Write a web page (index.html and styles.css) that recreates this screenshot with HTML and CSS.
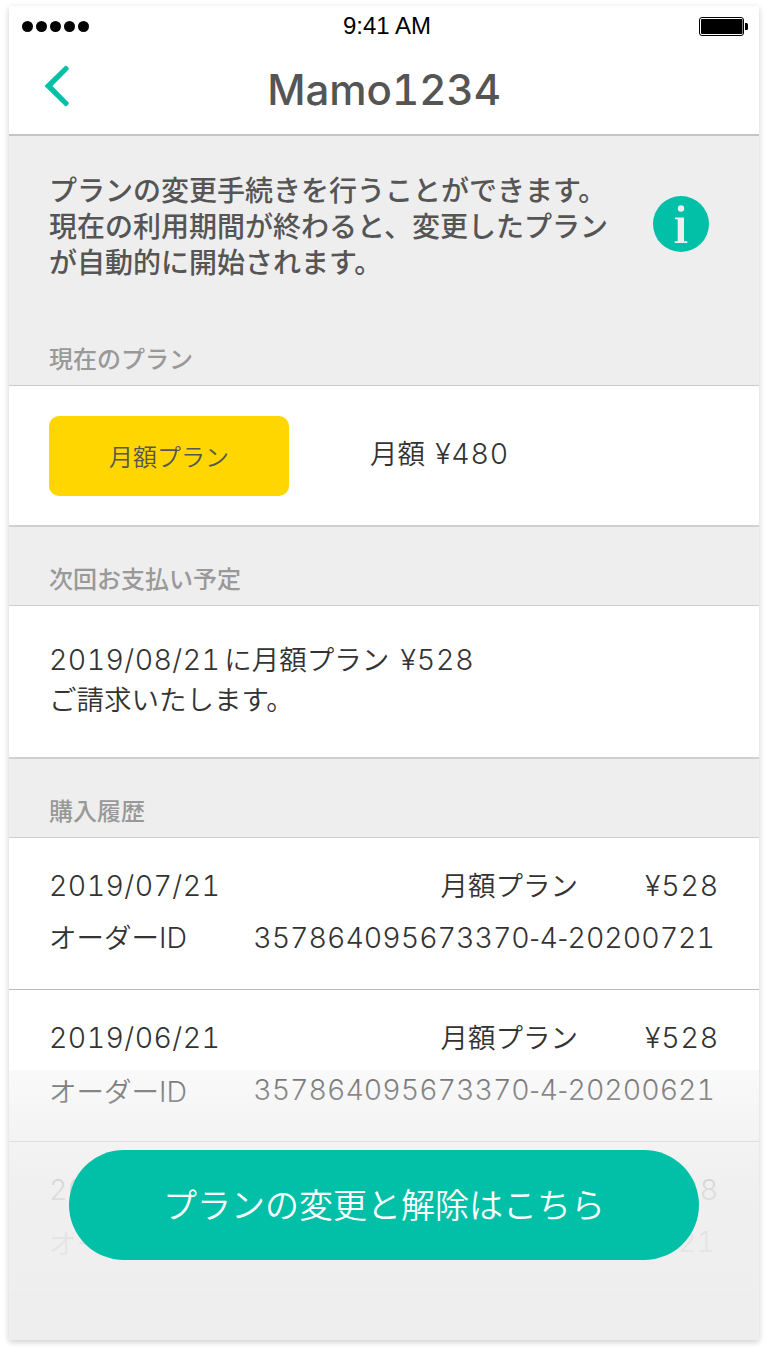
FILE: index.html
```html
<!DOCTYPE html>
<html lang="ja">
<head>
<meta charset="UTF-8" />
<meta name="viewport" content="width=device-width, initial-scale=1" />
<title>Mamo1234</title>
<link rel="stylesheet" href="styles.css">
</head>
<body>
  <div class="phone">
    <header class="header">
      <div class="status-bar">
        <div class="signal"><i></i><i></i><i></i><i></i><i></i></div>
        <div class="time">9:41 AM</div>
        <svg class="battery" width="49" height="20" viewBox="0 0 49 20" aria-hidden="true">
          <rect x="0.5" y="0.5" width="44" height="18" rx="2.5" fill="none" stroke="#000"/>
          <rect x="2" y="2" width="41.5" height="15" rx="1" fill="#000"/>
          <path d="M46 6h1.5a1.5 1.5 0 0 1 1.5 1.5v4a1.5 1.5 0 0 1-1.5 1.5H46z" fill="#000"/>
        </svg>
      </div>
      <div class="nav">
        <svg class="back" width="26" height="42" viewBox="0 0 26 42" aria-label="戻る">
          <path d="M0.5 21L21 0.9Q22 0.4 23 1.3L24.6 2.9Q25.2 3.8 24.6 4.6L8.4 21L24.6 37.4Q25.2 38.2 24.6 39.1L23 40.7Q22 41.6 21 41.1Z" fill="#02c0a7"/>
        </svg>
        <h1>Mamo1234</h1>
      </div>
    </header>

    <section class="intro">
      <p>プランの変更手続きを行うことができます。<br>現在の利用期間が終わると、変更したプラン<br>が自動的に開始されます。</p>
      <svg class="info" width="56" height="56" viewBox="0 0 56 56" aria-hidden="true">
        <circle cx="28" cy="28" r="28" fill="#02c0a7"/>
        <circle cx="28" cy="12.5" r="3.2" fill="#eee"/>
        <path d="M22 21.5H31V45.2H34.3V47H21.7V45.2H24.7V23.2H22Z" fill="#eee"/>
      </svg>
    </section>

    <h2 class="section-title first">現在のプラン</h2>
    <section class="panel plan">
      <div class="plan-badge">月額プラン</div>
      <div class="plan-price">月額 <span class="num yen">¥480</span></div>
    </section>

    <h2 class="section-title">次回お支払い予定</h2>
    <section class="panel payment">
      <p><span class="num date">2019/08/21</span>に月額プラン <span class="num yen">¥528</span><br>ご請求いたします。</p>
    </section>

    <h2 class="section-title">購入履歴</h2>
    <section class="history">
      <div class="order">
        <div class="order-row">
          <span class="num date">2019/07/21</span>
          <span class="plan-name">月額プラン</span>
          <span class="num yen price">¥528</span>
        </div>
        <div class="order-row">
          <span class="label">オーダー<span class="latin">ID</span></span>
          <span class="num order-id">357864095673370<span class="dash">-</span>4<span class="dash">-</span>20200721</span>
        </div>
      </div>
      <div class="order">
        <div class="order-row">
          <span class="num date">2019/06/21</span>
          <span class="plan-name">月額プラン</span>
          <span class="num yen price">¥528</span>
        </div>
        <div class="order-row">
          <span class="label low">オーダー<span class="latin">ID</span></span>
          <span class="num order-id">357864095673370<span class="dash">-</span>4<span class="dash">-</span>20200621</span>
        </div>
      </div>
      <div class="order">
        <div class="order-row">
          <span class="num date">2019/05/21</span>
          <span class="plan-name">月額プラン</span>
          <span class="num yen price">¥528</span>
        </div>
        <div class="order-row">
          <span class="label low">オーダー<span class="latin">ID</span></span>
          <span class="num order-id">357864095673370<span class="dash">-</span>4<span class="dash">-</span>20200521</span>
        </div>
      </div>
    </section>

    <div class="footer">
      <button class="change-btn">プランの変更と解除はこちら</button>
    </div>
  </div>
</body>
</html>
```
FILE: styles.css
```css
* {
  box-sizing: border-box;
}

body {
  margin: 0;
  padding: 6px 9px 12px;
  background: #fff;
  color: #333;
  font-family: "Noto Sans CJK JP", sans-serif;
  font-size: 27.5px;
  font-weight: 350;
}

h1, h2, p {
  margin: 0;
}

.phone {
  position: relative;
  width: 750px;
  height: 1334px;
  overflow: hidden;
  background: #eee;
  box-shadow: 0 2px 6px rgba(0,0,0,0.2);
}

.num,
.latin {
  font-family: Inter, sans-serif;
  font-size: 28.5px;
  font-weight: 300;
  line-height: 1;
  white-space: nowrap;
}

.num {
  font-variant-numeric: tabular-nums;
}

.date {
  letter-spacing: 0.4px;
}

.yen {
  letter-spacing: 0.8px;
}

.dash {
  font-family: "Noto Sans CJK JP", sans-serif;
  font-weight: 350;
  font-size: 28px;
  line-height: 0;
}

/* Header */
.header {
  height: 130px;
  background: #fff;
  border-bottom: 2px solid #c4c4c9;
}

.status-bar {
  display: grid;
  grid-template-columns: 1fr auto 1fr;
  align-items: center;
  height: 40px;
  padding: 0 11px 0 13px;
}

.signal {
  display: flex;
  gap: 3px;
}

.signal i {
  width: 11px;
  height: 11px;
  border-radius: 50%;
  background: #000;
}

.time {
  padding-left: 4px;
  color: #000;
  font-family: "Liberation Sans", sans-serif;
  font-size: 24px;
  font-weight: 400;
  line-height: 40px;
}

.battery {
  justify-self: end;
  margin-top: 2px;
}

.nav {
  display: grid;
  grid-template-columns: 80px 1fr 80px;
  align-items: center;
  height: 80px;
}

.back {
  justify-self: end;
  margin-right: 19px;
}

.nav h1 {
  padding-top: 8px;
  color: #555;
  font-family: Inter, sans-serif;
  font-size: 42px;
  font-weight: 500;
  font-variant-numeric: tabular-nums;
  line-height: 60px;
  text-align: center;
}

/* Intro */
.intro {
  display: flex;
  justify-content: space-between;
  height: 188px;
  padding: 35px 50px 0 40px;
}

.intro p {
  color: #555;
  font-size: 28px;
  font-weight: 500;
  line-height: 36px;
  white-space: nowrap;
}

.info {
  margin-top: 25px;
}

.section-title {
  height: 78px;
  padding: 33px 40px 0;
  color: #999;
  font-size: 24px;
  font-weight: 500;
  line-height: 36px;
}

.section-title.first {
  height: 61px;
  padding-top: 16px;
}

/* Panels */
.panel {
  background: #fff;
  border-top: 1px solid #ccc;
  border-bottom: 2px solid #d0d0d0;
}

.plan {
  display: flex;
  align-items: center;
  gap: 81px;
  height: 142px;
  padding: 0 40px;
}

.plan-badge {
  width: 240px;
  height: 80px;
  border-radius: 10px;
  background: #ffd600;
  color: #555;
  font-size: 24px;
  line-height: 80px;
  text-align: center;
}

.plan-price {
  padding-bottom: 7px;
  word-spacing: 4px;
}

.payment {
  height: 154px;
  padding: 32px 40px 0;
  line-height: 40px;
  word-spacing: 5px;
}

.payment .date {
  margin-right: 4px;
}

/* Purchase history */
.history {
  background: #fff;
  border-top: 1px solid #ccc;
}

.order {
  height: 152px;
  padding: 22px 40px 0;
  border-bottom: 1px solid #bbb;
}

.order-row {
  display: flex;
  align-items: center;
  height: 52px;
}

.plan-name {
  margin-left: auto;
  padding-bottom: 4px;
}

.price {
  width: 141px;
  text-align: right;
}

.order-id {
  margin-left: auto;
  padding-right: 4px;
}

.label {
  padding-bottom: 4px;
}

.label.low {
  padding: 0;
}

/* Footer fades the list out behind the button */
.footer {
  position: absolute;
  left: 0;
  right: 0;
  bottom: 0;
  height: 270px;
  padding: 80px 60px 0;
  background: linear-gradient(rgba(238,238,238,0.32), rgba(238,238,238,0.72) 27%, rgba(238,238,238,0.9) 45%, rgba(238,238,238,0.94) 64%, #eee);
}

.change-btn {
  display: block;
  width: 630px;
  height: 110px;
  padding: 0 0 2px;
  border: none;
  border-radius: 55px;
  background: #02c0a7;
  color: #fff;
  font-family: inherit;
  font-size: 34px;
  font-weight: 350;
  line-height: 108px;
  cursor: pointer;
}
```
